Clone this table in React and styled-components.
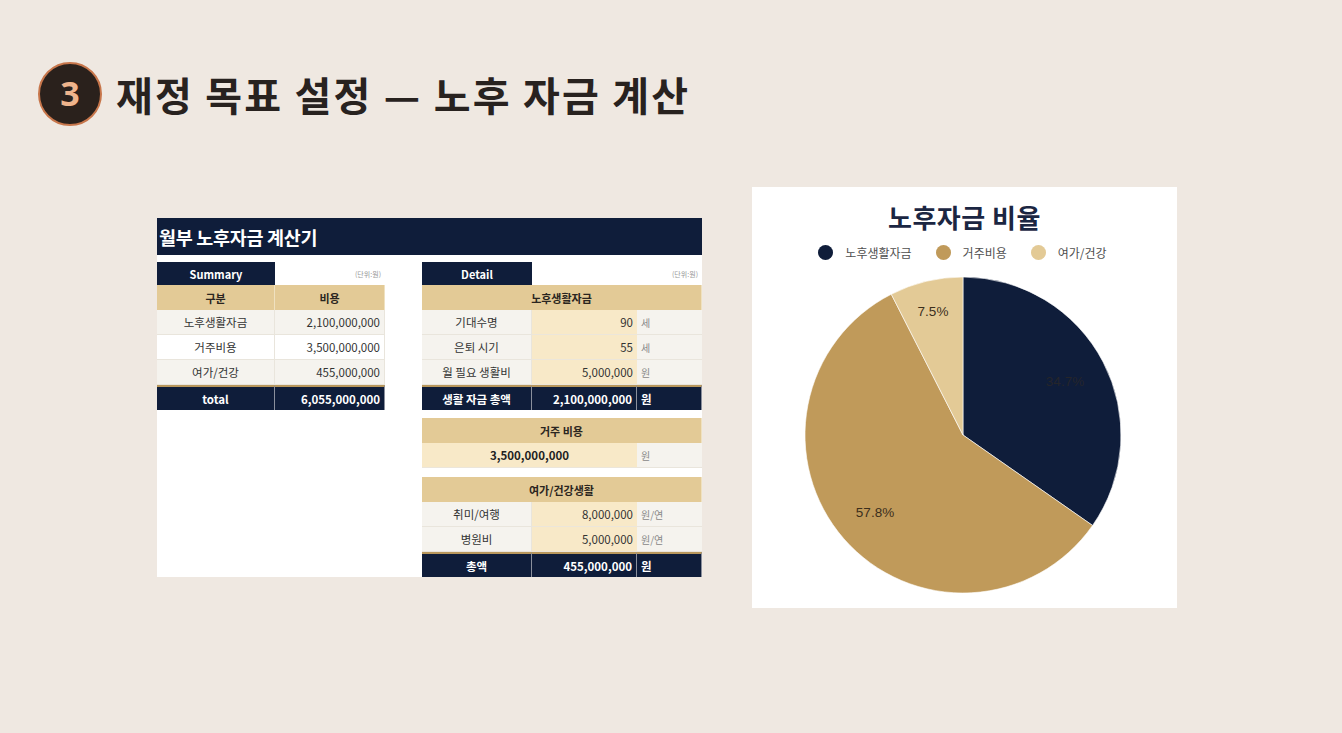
import React from "react";
import styled, { createGlobalStyle } from "styled-components";

const Global = createGlobalStyle`
  html, body { margin: 0; padding: 0; background: #efe8e1; }
  body { font-family: "Noto Sans CJK KR", "Noto Sans", sans-serif; }
  * { box-sizing: border-box; }
`;

const NAVY = "#0f1d3a";
const GOLD = "#e3ca96";
const CREAM = "#f8e9c8";
const LIGHT = "#f5f3ee";
const KR = `"Noto Sans CJK KR", "Noto Sans", sans-serif`;

const Page = styled.div`
  width: 1342px;
  height: 733px;
  padding: 62px 0 0 38px;
  background: #efe8e1;
  overflow: hidden;
`;

const Header = styled.header`
  display: flex;
  align-items: center;
  gap: 14px;
`;

const Badge = styled.div`
  width: 64px;
  height: 64px;
  border-radius: 50%;
  background: #2a211c;
  border: 2px solid #c7764b;
  color: #efb48c;
  font-family: "Noto Sans", sans-serif;
  font-weight: 700;
  font-size: 34px;
  display: flex;
  align-items: center;
  justify-content: center;
  line-height: 1;
  padding-bottom: 2px;
`;

const Title = styled.h1`
  margin: 0;
  font-family: ${KR};
  font-weight: 700;
  font-size: 40px;
  letter-spacing: 2.2px;
  color: #28221f;
  line-height: 64px;
`;

const Content = styled.div`
  display: flex;
  align-items: flex-start;
  gap: 50px;
  margin: 61px 0 0 119px;
`;

const Sheet = styled.div`
  margin-top: 31px;
  width: 545px;
  height: 359px;
  background: #ffffff;
  font-family: ${KR};
`;

const SheetTitle = styled.div`
  height: 37px;
  background: ${NAVY};
  color: #fff;
  font-weight: 700;
  font-size: 18.5px;
  display: flex;
  align-items: center;
  padding-left: 2px;
  letter-spacing: -0.3px;
`;

const SheetBody = styled.div`
  display: flex;
  align-items: flex-start;
  gap: 37px;
  padding-top: 7px;
`;

const Table = styled.div`
  display: grid;
  grid-template-columns: ${(p) => p.$cols};
`;

const Cell = styled.div`
  height: ${(p) => (p.$short ? 23 : 25)}px;
  grid-column: ${(p) => (p.$span ? `span ${p.$span}` : "auto")};
  display: flex;
  align-items: center;
  justify-content: ${(p) =>
    p.$align === "right" ? "flex-end" : p.$align === "left" ? "flex-start" : "center"};
  padding: 0 4px;
  font-size: ${(p) => (p.$tiny ? 7 : 11.5)}px;
  white-space: nowrap;
  ${(p) => {
    switch (p.$kind) {
      case "navy":
        return `background:${NAVY};color:#fff;font-weight:700;font-size:11px;`;
      case "total":
        return `background:${NAVY};color:#fff;font-weight:700;font-size:11.5px;border-top:2px solid #b8975c;border-right:1px solid #8a8f9c;`;
      case "gold":
        return `background:${GOLD};color:#2a2520;font-weight:700;font-size:11px;border-right:1px solid #efe1c0;`;
      case "cream":
        return `background:${CREAM};color:#333;border-bottom:1px solid #ece6da;`;
      case "creamBold":
        return `background:${CREAM};color:#222;font-weight:700;border-bottom:1px solid #ece6da;`;
      case "light":
        return `background:${LIGHT};color:#333;border-bottom:1px solid #e9e5dc;border-right:1px solid #e9e5dc;`;
      case "unit":
        return `background:${LIGHT};color:#888;font-size:10px;border-bottom:1px solid #e9e5dc;`;
      case "white":
        return `background:#fff;color:#333;border-bottom:1px solid #e9e5dc;border-right:1px solid #e9e5dc;`;
      default:
        return `background:#fff;color:#999;`;
    }
  }}
`;

const Gap = styled.div`
  grid-column: 1 / -1;
  height: ${(p) => p.$h}px;
  background: #fff;
`;

const Card = styled.div`
  width: 425px;
  height: 421px;
  background: #ffffff;
  display: flex;
  flex-direction: column;
  align-items: center;
  font-family: ${KR};
`;

const CardTitle = styled.div`
  margin-top: 11px;
  font-size: 26px;
  font-weight: 700;
  color: #1b2642;
  letter-spacing: 0.5px;
  line-height: 38px;
`;

const Legend = styled.div`
  display: flex;
  align-items: center;
  gap: 24px;
  margin-top: 8px;
  margin-left: -4px;
`;

const LegendItem = styled.div`
  display: flex;
  align-items: center;
  gap: 12px;
  font-size: 12px;
  color: #4f4f4f;
`;

const Dot = styled.span`
  width: 15px;
  height: 15px;
  border-radius: 50%;
  background: ${(p) => p.$c};
`;

const PieWrap = styled.div`
  margin-top: 14px;
  margin-left: -3px;
`;

const summaryRows = [
  ["노후생활자금", "2,100,000,000", "light"],
  ["거주비용", "3,500,000,000", "white"],
  ["여가/건강", "455,000,000", "light"],
];

function Pie() {
  const cx = 160, cy = 160, r = 158;
  const data = [
    { v: 34.7, c: "#0f1d3a" },
    { v: 57.8, c: "#c09a5a" },
    { v: 7.5, c: "#e3ca96" },
  ];
  let a = 0;
  const pt = (deg) => {
    const rad = (deg * Math.PI) / 180;
    return [cx + r * Math.sin(rad), cy - r * Math.cos(rad)];
  };
  const paths = data.map((d, i) => {
    const s = a;
    const e = a + (d.v / 100) * 360;
    a = e;
    const [x1, y1] = pt(s);
    const [x2, y2] = pt(e);
    const large = e - s > 180 ? 1 : 0;
    return (
      <path
        key={i}
        d={`M${cx},${cy} L${x1},${y1} A${r},${r} 0 ${large} 1 ${x2},${y2} Z`}
        fill={d.c}
        stroke="#fff"
        strokeWidth="0.6"
      />
    );
  });
  return (
    <svg width="320" height="320" viewBox="0 0 320 320">
      {paths}
      <g fontFamily='"Liberation Sans", Arial, sans-serif' fontSize="13.5" textAnchor="middle">
        <text x={cx + 102} y={cy - 49} fill="#25252a">34.7%</text>
        <text x={cx - 88} y={cy + 82} fill="#3b2e1c">57.8%</text>
        <text x={cx - 30} y={cy - 119} fill="#3b2e1c">7.5%</text>
      </g>
    </svg>
  );
}

export default function App() {
  return (
    <Page>
      <Global />
      <Header>
        <Badge>3</Badge>
        <Title>재정 목표 설정 — 노후 자금 계산</Title>
      </Header>
      <Content>
        <Sheet>
          <SheetTitle>월부 노후자금 계산기</SheetTitle>
          <SheetBody>
            <Table $cols="118px 110px">
              <Cell $short $kind="navy">Summary</Cell>
              <Cell $short $align="right" $tiny>(단위:원)</Cell>
              <Cell $kind="gold">구분</Cell>
              <Cell $kind="gold">비용</Cell>
              {summaryRows.map(([k, v, kind]) => (
                <React.Fragment key={k}>
                  <Cell $kind={kind}>{k}</Cell>
                  <Cell $kind={kind} $align="right">{v}</Cell>
                </React.Fragment>
              ))}
              <Cell $kind="total">total</Cell>
              <Cell $kind="total" $align="right">6,055,000,000</Cell>
            </Table>

            <Table $cols="110px 105px 65px">
              <Cell $short $kind="navy">Detail</Cell>
              <Cell $short $span={2} $align="right" $tiny>(단위:원)</Cell>
              <Cell $span={3} $kind="gold">노후생활자금</Cell>
              <Cell $kind="light">기대수명</Cell>
              <Cell $kind="cream" $align="right">90</Cell>
              <Cell $kind="unit" $align="left">세</Cell>
              <Cell $kind="light">은퇴 시기</Cell>
              <Cell $kind="cream" $align="right">55</Cell>
              <Cell $kind="unit" $align="left">세</Cell>
              <Cell $kind="light">월 필요 생활비</Cell>
              <Cell $kind="cream" $align="right">5,000,000</Cell>
              <Cell $kind="unit" $align="left">원</Cell>
              <Cell $kind="total">생활 자금 총액</Cell>
              <Cell $kind="total" $align="right">2,100,000,000</Cell>
              <Cell $kind="total" $align="left">원</Cell>
              <Gap $h={8} />
              <Cell $span={3} $kind="gold">거주 비용</Cell>
              <Cell $span={2} $kind="creamBold">3,500,000,000</Cell>
              <Cell $kind="unit" $align="left">원</Cell>
              <Gap $h={9} />
              <Cell $span={3} $kind="gold">여가/건강생활</Cell>
              <Cell $kind="light">취미/여행</Cell>
              <Cell $kind="cream" $align="right">8,000,000</Cell>
              <Cell $kind="unit" $align="left">원/연</Cell>
              <Cell $kind="light">병원비</Cell>
              <Cell $kind="cream" $align="right">5,000,000</Cell>
              <Cell $kind="unit" $align="left">원/연</Cell>
              <Cell $kind="total">총액</Cell>
              <Cell $kind="total" $align="right">455,000,000</Cell>
              <Cell $kind="total" $align="left">원</Cell>
            </Table>
          </SheetBody>
        </Sheet>

        <Card>
          <CardTitle>노후자금 비율</CardTitle>
          <Legend>
            <LegendItem><Dot $c="#0f1d3a" />노후생활자금</LegendItem>
            <LegendItem><Dot $c="#c09a5a" />거주비용</LegendItem>
            <LegendItem><Dot $c="#e3ca96" />여가/건강</LegendItem>
          </Legend>
          <PieWrap>
            <Pie />
          </PieWrap>
        </Card>
      </Content>
    </Page>
  );
}
